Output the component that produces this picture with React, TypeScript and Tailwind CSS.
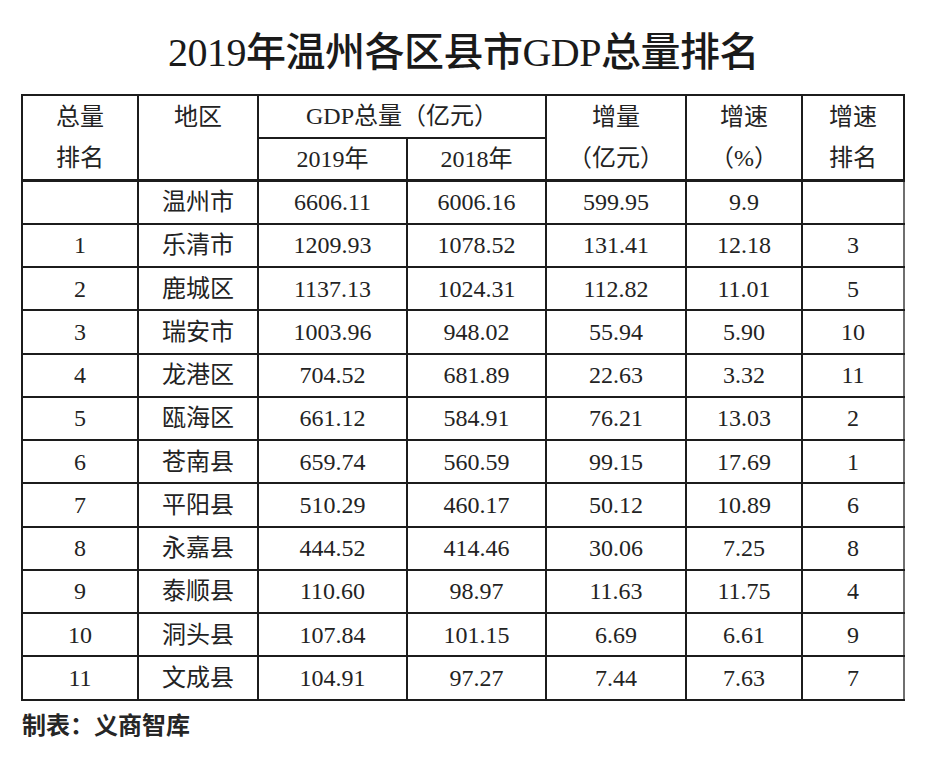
const font = { fontFamily: '"Liberation Serif", "Noto Sans CJK SC", serif' };

const rows = [
  ["", "温州市", "6606.11", "6006.16", "599.95", "9.9", ""],
  ["1", "乐清市", "1209.93", "1078.52", "131.41", "12.18", "3"],
  ["2", "鹿城区", "1137.13", "1024.31", "112.82", "11.01", "5"],
  ["3", "瑞安市", "1003.96", "948.02", "55.94", "5.90", "10"],
  ["4", "龙港区", "704.52", "681.89", "22.63", "3.32", "11"],
  ["5", "瓯海区", "661.12", "584.91", "76.21", "13.03", "2"],
  ["6", "苍南县", "659.74", "560.59", "99.15", "17.69", "1"],
  ["7", "平阳县", "510.29", "460.17", "50.12", "10.89", "6"],
  ["8", "永嘉县", "444.52", "414.46", "30.06", "7.25", "8"],
  ["9", "泰顺县", "110.60", "98.97", "11.63", "11.75", "4"],
  ["10", "洞头县", "107.84", "101.15", "6.69", "6.61", "9"],
  ["11", "文成县", "104.91", "97.27", "7.44", "7.63", "7"],
];

const cell = "border-2 border-[#1c1c1c] p-0 text-center align-middle";

// header cell spanning both header rows, one label per row
const TwoLine = ({ top, bottom }: { top: string; bottom?: string }) => (
  <td rowSpan={2} className={`${cell} align-top`}>
    <div className="flex h-[41.5px] items-center justify-center">{top}</div>
    <div className="flex h-[41.5px] items-center justify-center">{bottom}</div>
  </td>
);

export default function App() {
  return (
    <div className="min-h-[774px] w-[927px] bg-white text-[#232323]" style={font}>
      <h1 className="pt-[30px] text-center text-[40px] leading-[46px] font-medium tracking-[-0.5px] text-[#1a1a1a]">
        2019年温州各区县市GDP总量排名
      </h1>

      <table className="mt-[18px] ml-[21px] w-[882px] table-fixed border-collapse text-[24px] leading-none">
        <colgroup>
          <col className="w-[116px]" />
          <col className="w-[120px]" />
          <col className="w-[149px]" />
          <col className="w-[139px]" />
          <col className="w-[140px]" />
          <col className="w-[116px]" />
          <col className="w-[102px]" />
        </colgroup>
        <thead>
          <tr className="h-[42px]">
            <TwoLine top="总量" bottom="排名" />
            <TwoLine top="地区" />
            <td colSpan={2} className={cell}>GDP总量（亿元）</td>
            <TwoLine top="增量" bottom="（亿元）" />
            <TwoLine top="增速" bottom="（%）" />
            <TwoLine top="增速" bottom="排名" />
          </tr>
          <tr className="h-[42px]">
            <td className={cell}>2019年</td>
            <td className={cell}>2018年</td>
          </tr>
        </thead>
        <tbody className="border-t-[3px] border-[#1c1c1c]">
          {rows.map((r, i) => (
            <tr key={i} className="h-[43.25px]">
              {r.map((v, j) => (
                <td key={j} className={`${cell} ${j === 6 ? "border-r-[#6f6f6f]" : ""}`}>
                  {v}
                </td>
              ))}
            </tr>
          ))}
        </tbody>
      </table>

      <p className="mt-[10px] ml-[22px] text-[24px] leading-[30px] font-bold text-[#262626]">
        制表：义商智库
      </p>
    </div>
  );
}
